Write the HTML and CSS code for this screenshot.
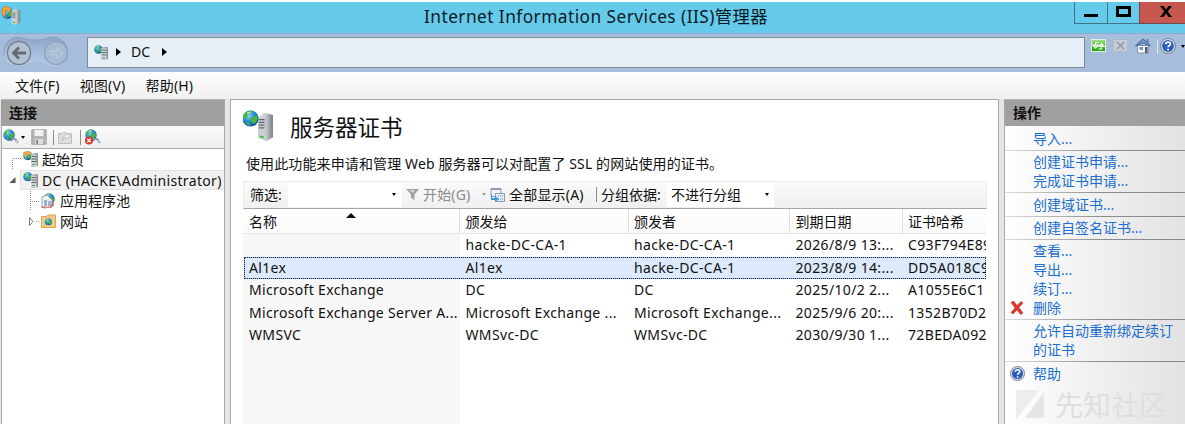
FILE: index.html
```
<!DOCTYPE html>
<html lang="zh-CN">
<head>
<meta charset="utf-8">
<title>Internet Information Services (IIS)管理器</title>
<link rel="stylesheet" href="styles.css">
</head>
<body>
<svg class="defs" width="0" height="0">
  <defs>
    <radialGradient id="sea" cx=".35" cy=".3" r=".8"><stop offset="0" stop-color="#9fe0ff"/><stop offset=".45" stop-color="#2c8be0"/><stop offset="1" stop-color="#0c3f9c"/></radialGradient>
    <linearGradient id="metal"><stop offset="0" stop-color="#e4e7ea"/><stop offset=".55" stop-color="#c2c7cb"/><stop offset="1" stop-color="#777e84"/></linearGradient>
    <linearGradient id="green" x2="0" y2="1"><stop offset="0" stop-color="#9be08a"/><stop offset=".5" stop-color="#4fc02f"/><stop offset="1" stop-color="#28a012"/></linearGradient>
    <linearGradient id="cradle" x2="0" y2="1"><stop offset="0" stop-color="#8ba5cb"/><stop offset=".5" stop-color="#a3bcdc"/><stop offset="1" stop-color="#b5cbe6"/></linearGradient>
    <symbol id="globe" viewBox="0 0 16 16">
      <circle cx="8" cy="8" r="7.6" fill="url(#sea)"/>
      <path d="M2 4Q5 0 9 1L8 4 5 5 5 8 2 9zM9 7l4-2 2 3-2 4-3 1-2-3zM4 11l3 1 1 3-4-2z" fill="#45b53c"/>
      <path d="M4 3q3-2 5-1l-3 2z" fill="#d8f8d0" opacity=".8"/>
    </symbol>
    <symbol id="tower" viewBox="0 0 16 30">
      <path d="M0 4 7 0 16 2V26L9 30 0 27z" fill="url(#metal)"/>
      <path d="M0 4 8 5V29L0 27z" fill="#c9ced2"/>
      <path d="M1 7h6M1 10h6M1 13h6M1 16h6" stroke="#5f676e" stroke-width="1.3"/>
      <path d="M2 25l4 1" stroke="#37c43b" stroke-width="2"/>
    </symbol>
    <symbol id="server" viewBox="0 0 16 16">
      <use href="#globe" x="0" y="0" width="9.5" height="9.5"/>
      <path d="M8 3l6-1 1 1v12l-6 1-1-1z" fill="#8b9298"/>
      <path d="M8 3.500h5.500v12H8z" fill="#d0d5d8"/>
      <path d="M8.500 5.500h5M8.500 8h5M8.500 10.500h5" stroke="#5d666d"/>
      <path d="M9 13.500h3" stroke="#43a650"/>
    </symbol>
    <symbol id="connect" viewBox="0 0 16 16">
      <use href="#globe" width="12" height="12"/>
      <path d="M8 12q2-4 5-1l2 3" fill="none" stroke="#8296aa" stroke-width="2"/><circle cx="13.500" cy="12.500" r="1.500" fill="#b8c8d8"/>
    </symbol>
    <symbol id="help" viewBox="0 0 16 16">
      <circle cx="8" cy="8" r="7.500" fill="#dde2e8" stroke="#77808d"/>
      <circle cx="8" cy="8" r="5.900" fill="#2b5eb8"/>
      <path d="M5.700 6.200C5.700 3.300 10.500 3.400 10.400 6c0 1.500-2.300 1.600-2.300 3.300M8.100 10.800v1.700" fill="none" stroke="#fff" stroke-width="1.700"/>
    </symbol>
  </defs>
</svg>
<div class="window">
  <header class="titlebar">
    <svg class="app-icon" viewBox="0 0 20 19"><use href="#globe" x="1" y="2" width="11" height="11"/><path d="M1 3L4 0 10 2 9 7 5 4 4 11 1 8z" fill="#f2a33c" stroke="#a46c2e" stroke-width=".5"/><use href="#tower" x="10" y="3" width="10" height="16"/></svg>
    <h1 class="title">Internet Information Services (IIS)管理器</h1>
    <div class="controls">
      <span class="ctl"><svg width="14" height="12"><path d="M0 9.500h14" stroke="#000" stroke-width="3"/></svg></span>
      <span class="ctl"><svg width="15" height="11"><path d="M1.500 1.500h12v8h-12z" fill="none" stroke="#000" stroke-width="3"/></svg></span>
      <span class="ctl close"><svg width="12" height="11" viewBox="0 0 12 11"><path d="M0 0H3.500L6 3.400 8.500 0H12L7.800 5.400 12 11H8.500L6 7.500 3.500 11H0L4.200 5.400z"/></svg></span>
    </div>
  </header>

  <div class="addressbar">
    <svg class="nav" width="68" height="32" viewBox="0 0 68 32">
      <path d="M3 17C2 3 13 0 21 2q13 4 26 0c10-3 22 4 20 17-2 10-14 14-22 8q-9-3-20 1C14 33 4 27 3 17z" fill="url(#cradle)"/>
      <path d="M3 20C1 4 13 0 21 2q13 4 26 0c9-3 17 3 19 10" fill="none" stroke="#8ba1c2"/>
      <circle cx="18" cy="17" r="11.500" fill="#b3c3d6" stroke="#7c8188" stroke-width="1.400"/>
      <path d="M25 17H13M18 11.500L12.500 17l5.500 5.500" fill="none" stroke="#666a70" stroke-width="2.800"/>
      <circle cx="55" cy="17" r="11.500" fill="#a7bbd5" stroke="#8e9db3" stroke-width="1.200"/>
      <path d="M49 15.500h7v-4l6 5.500-6 5.500v-4h-7" fill="none" stroke="#c1cede" stroke-width="1"/>
    </svg>
    <div class="path">
      <svg class="i15" viewBox="0 0 16 16"><use href="#server"/></svg>
      <i class="crumb"></i><span class="crumb-name">DC</span><i class="crumb"></i>
    </div>
    <div class="address-tools">
      <svg width="15" height="15" viewBox="0 0 15 15"><path d="M0 1h15v13H0z" fill="#dcefdc"/><path d="M1 2h13v11H1z" fill="url(#green)"/><path d="M7.500 4.500H4.500V8M2 7l2.500 3L7 7zM7.500 11h3V7.500M8 8.500l2.500-3 2.500 3z" fill="none" stroke="#fff" stroke-width="1.200"/></svg>
      <svg width="15" height="15" viewBox="0 0 15 15"><path d="M.5 1.500h14v12H.5z" fill="#c5ccd4" stroke="#b2bac4"/><path d="M4 4l7 7M11 4l-7 7" stroke="#8d98a6" stroke-width="1.400"/></svg>
      <svg width="16" height="16" viewBox="0 0 16 16"><path d="M2.500 7.500h11v7.500h-11z" fill="#f6f8fb" stroke="#8291aa"/><path d="M.5 8L8 1l7.500 7L8 5z" fill="#7fa0d4" stroke="#5375ae" stroke-width="1.200"/><path d="M11.500 1h2v4h-2z" fill="#607db0"/><path d="M10 9h2.500v6H10z" fill="#46586f"/><path d="M4.500 9H8v3H4.500z" fill="#738db4"/></svg>
      <i class="divider"></i>
      <svg width="16" height="16"><use href="#help"/></svg>
      <i class="drop"></i>
    </div>
  </div>

  <nav class="menubar"><span>文件(F)</span><span>视图(V)</span><span>帮助(H)</span></nav>

  <main class="workspace">
    <aside class="connections">
      <h2 class="panel-title">连接</h2>
      <div class="conn-tools">
        <svg width="16" height="16"><use href="#connect"/></svg><i class="drop"></i>
        <svg class="save" width="16" height="16" viewBox="0 0 16 16"><path d="M.8.800h14.400v14.400H.8z" fill="#b4b4b4" stroke="#a2a2a2"/><path d="M3.500 1h9v6h-9z" fill="#f1f1f1"/><path d="M4 10h8v5H4z" fill="#dcdcdc"/><path d="M5 11h2v4H5z" fill="#8c8c8c"/></svg>
        <i class="vline"></i>
        <svg class="up" width="14" height="14" viewBox="0 0 14 14"><path d="M.5 3.500h4l1-1h2l1 1h5v10H.5z" fill="#dedede" stroke="#bdbdbd"/><path d="M4 11q0-5 4-6V3l4 3-4 3V7q-3 1-4 4z" fill="#f7f7f7" stroke="#b5b5b5" stroke-width=".7"/></svg>
        <i class="vline two"></i>
        <svg width="16" height="16"><use href="#connect"/><circle cx="4" cy="11.500" r="4" fill="#dd3526"/><path d="M2.300 9.800l3.400 3.400M5.700 9.800l-3.400 3.400" stroke="#fff" stroke-width="1.300"/></svg>
      </div>
      <div class="tree">
        <div class="node root"><svg class="guide" width="11" height="20"><path d="M.5 20V9.500h10" /></svg><svg class="i16" viewBox="0 0 16 16"><use href="#server"/><path d="M0 1l5-1 4 2-1 2-4-1-1 5-2-3z" fill="#eea249"/></svg><span>起始页</span></div>
        <div class="node host"><svg class="twist" width="8" height="8"><path d="M6.500 1v6h-6z" fill="#555"/></svg><div class="selected"><svg class="i16" viewBox="0 0 16 16"><use href="#server"/></svg><span class="host-name">DC (HACKE\Administrator)</span></div></div>
        <div class="node child"><svg class="guide" width="10" height="20"><path d="M.5 0v20M0 10.500h9" /></svg><svg class="i16" viewBox="0 0 16 16"><use href="#globe" x="3" y="0" width="12" height="12"/><path d="M2 4l5-2 5 5v7H2z" fill="#edf2f7" stroke="#9aa4b2"/><path d="M4 7h3v6H4zM8 8h3v5H8z" fill="#9ab2cb"/><path d="M1 13q6 3 10 0l2-5 1 4q-3 4-12 3z" fill="#e25a43"/></svg><span>应用程序池</span></div>
        <div class="node child sites"><svg class="guide arrow" width="12" height="20"><path class="closed" d="M1.500 6.500v8L5 10.500z"/><path d="M8 10.500h4"/></svg><svg class="i15" viewBox="0 0 15 15"><path d="M.5 2.500h5L7 1h7.500v12.500H.5z" fill="#f4c982" stroke="#dba557"/><use href="#globe" x="3.500" y="4" width="7.500" height="7.500"/></svg><span>网站</span></div>
      </div>
    </aside>

    <section class="content">
      <div class="heading">
        <svg width="32" height="32" viewBox="0 0 32 32"><use href="#tower" x="14" y="3" width="17" height="28"/><use href="#globe" x="-1" y="0" width="17" height="17"/></svg>
        <h2>服务器证书</h2>
      </div>
      <p class="intro">使用此功能来申请和管理 Web 服务器可以对配置了 SSL 的网站使用的证书。</p>
      <div class="filterbar">
        <label>筛选:</label><span class="combo filter"><i class="drop"></i></span>
        <svg class="funnel" width="13" height="13" viewBox="0 0 13 13"><path d="M0 1h13L8.500 6.500V12L5 10V6.500z" fill="#a3a3a3"/><path d="M3 2h6L7 5z" fill="#d5d5d5"/></svg>
        <span class="start">开始(G)</span><i class="drop dim"></i>
        <svg class="show-icon" width="16" height="16" viewBox="0 0 16 16"><path d="M1 1.500h10v8H1z" fill="#eef3f9" stroke="#8d9bad"/><path d="M1 2h10" stroke="#8d9bad" stroke-width="2"/><path d="M5.500 6.500h9v8h-9z" fill="#e3edf8" stroke="#8d9bad"/><path d="M8 9h5M8 12h5" stroke="#6d86a6" stroke-dasharray="1 1"/><path d="M2 7v4h3V9l4 3-4 3v-2H1V7z" fill="#3a9ad8"/></svg>
        <span class="show-all">全部显示(A)</span><i class="vline"></i><span class="group-label">分组依据:</span>
        <span class="combo group"><span>不进行分组</span><i class="drop"></i></span>
      </div>
      <div class="grid">
        <div class="row head"><span>名称<i class="sort"></i></span><span>颁发给</span><span>颁发者</span><span>到期日期</span><span>证书哈希</span></div>
        <div class="row"><span></span><span>hacke-DC-CA-1</span><span>hacke-DC-CA-1</span><span>2026/8/9 13:...</span><span>C93F794E89</span></div>
        <div class="row picked"><span>Al1ex</span><span>Al1ex</span><span>hacke-DC-CA-1</span><span>2023/8/9 14:...</span><span>DD5A018C9</span></div>
        <div class="row"><span>Microsoft Exchange</span><span>DC</span><span>DC</span><span>2025/10/2 2...</span><span>A1055E6C1</span></div>
        <div class="row"><span>Microsoft Exchange Server A...</span><span>Microsoft Exchange ...</span><span>Microsoft Exchange...</span><span>2025/9/6 20:...</span><span>1352B70D2</span></div>
        <div class="row"><span>WMSVC</span><span>WMSvc-DC</span><span>WMSvc-DC</span><span>2030/9/30 1...</span><span>72BEDA092</span></div>
      </div>
    </section>

    <aside class="actions">
      <h2 class="panel-title">操作</h2>
      <div class="group-box first"><a>导入...</a></div>
      <div class="group-box"><a>创建证书申请...</a><a>完成证书申请...</a></div>
      <div class="group-box roomy"><a>创建域证书...</a></div>
      <div class="group-box"><a>创建自签名证书...</a></div>
      <div class="group-box"><a>查看...</a><a>导出...</a><a>续订...</a><a><svg class="act-icon" width="14" height="14" viewBox="0 0 14 14"><path d="M1 1.500L3.500 0 7 4.500 11 .5 13 2 9 6.500 13 12 10.500 13.500 7 9 3 13 1 11.500 5 7z" fill="#d93a2d" stroke="#b82a21" stroke-width=".5"/></svg>删除</a></div>
      <div class="group-box"><a>允许自动重新绑定续订</a><a>的证书</a></div>
      <div class="group-box last"><a><svg class="act-icon help-icon" width="15" height="15"><use href="#help" width="15" height="15"/></svg>帮助</a></div>
      <div class="watermark"><svg width="32" height="31" viewBox="0 0 32 31"><path d="M0 1h23L0 31z" fill="#ededed"/><path d="M28 3v26H9z" fill="#e6e6e6"/></svg><span>先知社区</span></div>
    </aside>
  </main>
</div>
</body>
</html>
```
FILE: styles.css
```
* { box-sizing: border-box; }
body { margin: 0; background: #fff; }
.defs { display: block; position: absolute; }
svg { flex: none; display: block; }
.window {
  width: 1185px; height: 424px; padding-top: 2px; overflow: hidden;
  display: flex; flex-direction: column;
  font: 14px/19px "Noto Sans", "Noto Sans CJK SC", sans-serif; color: #111;
  white-space: nowrap;
}
h1, h2, p { margin: 0; font-weight: 400; }
.i16 { width: 16px; height: 16px; }
.i15 { width: 15px; height: 15px; }
.drop { flex: none; width: 0; height: 0; border: 2.5px solid transparent; border-top: 3px solid #000; border-bottom: 0; }
.drop.dim { border-top-color: #999; }
.vline { flex: none; width: 1px; height: 15px; background: #8c8c8c; }

.titlebar { height: 31px; background: #66caea; display: flex; position: relative; }
.app-icon { width: 20px; height: 19px; margin: 4px 0 0 1px; }
.title { flex: 1; margin-left: 403px; font-size: 17.3px; line-height: 29px; letter-spacing: .45px; color: #0b1b24; }
.controls { display: flex; height: 22px; }
.ctl { width: 33px; border-left: 1px solid #3b7387; border-bottom: 1px solid #3b7387; display: flex; align-items: center; justify-content: center; padding-bottom: 2px; }
.ctl + .ctl { width: 32px; }
.ctl.close { width: 46px; background: #c75850; padding-left: 6px; border-color: #6d4b50; }

.addressbar { height: 39px; background: #a6bedc; border-top: 1px solid #91a8cd; display: flex; }
.nav { margin: 2px 0 0 1px; }
.path { margin: 3px 0 0 18px; width: 998px; height: 31px; border: 1px solid #7e8b99; background: #e6eef6; display: flex; align-items: center; padding-left: 6px; }
.path .i15 { margin-top: -1px; }
.crumb { border: 4px solid transparent; border-left: 5px solid #000; border-right: 0; margin: 0 0 2px 7px; }
.crumb-name { margin: -2px 5px 0 10px; font-size: 14px; }
.address-tools { display: flex; align-items: flex-start; padding: 4px 0 0 6px; }
.address-tools svg + svg { margin-left: 7px; }
.address-tools .divider { width: 1px; height: 15px; margin: 1px 2px 0 6px; background: #dde7f2; }
.address-tools .drop { margin: 7px 0 0 5px; }
.path { flex: none; }

.menubar { height: 27px; background: linear-gradient(#fdfdfd, #f0f0f0); display: flex; gap: 20px; padding: 4px 0 0 15px; line-height: 19px; font-size: 14px; letter-spacing: .2px; }

.workspace { height: 325px; background: #e5e5e5; display: flex; padding-left: 1px; }
.panel-title { height: 27px; padding-left: 8px; background: #a0a0a0; border-top: 1px solid #b6b6b6; font-size: 14px; line-height: 26px; font-weight: 700; }
.connections { width: 224px; background: #fff; border: solid #a9a9a9; border-width: 0 1px; }
.connections .panel-title { margin-left: -1px; }
.conn-tools { height: 23px; border-bottom: 1px solid #a9a9a9; background: linear-gradient(#fbfbfb, #eee); display: flex; align-items: center; padding-left: 1px; }
.conn-tools .drop { margin-left: 2px; }
.conn-tools .save { margin-left: 6px; }
.conn-tools .vline { margin: 0 4px 0 6px; }
.conn-tools .vline.two { margin-left: 8px; }
.tree { padding-top: 0; }
.node { height: 20.700px; display: flex; align-items: center; font-size: 14px; }
.node > span { margin-left: 3px; }
.root { padding-left: 10px; }
.guide path { fill: none; stroke: #909090; stroke-dasharray: 1 1; }
.guide .closed { stroke: #777; stroke-dasharray: none; }
.host { padding-left: 7px; }
.selected { flex: 1; height: 20px; margin-left: 3px; padding-left: 2px; display: flex; align-items: center; background: #f0f0f0; border: 1px solid #e3e3e3; border-right: 0; }
.host-name { margin-left: 3px; font-size: 14px; letter-spacing: .34px; }
.child { padding-left: 28px; }
.child .i16 { margin-left: 0; margin-right: 1px; }
.sites { padding-left: 26px; }
.sites .i15 { margin-left: 1px; }
.sites > span { margin-left: 4px; }

.content { width: 769px; margin-left: 5px; background: #fff; border: 1px solid #aaa; border-bottom: 0; padding-left: 12px; }
.heading { height: 52px; display: flex; padding-top: 10px; }
.heading h2 { margin-left: 15px; font-size: 22.500px; line-height: 35px; }
.intro { height: 29px; padding: 2px 0 0 3px; letter-spacing: .12px; }
.filterbar { width: 744px; height: 28px; border: 1px solid #ececec; border-bottom: 1px solid #a6a6a6; background: linear-gradient(#fafafa, #f0f0f0); display: flex; align-items: center; padding: 0 0 1px 6px; }
.filterbar label { width: 38px; }
.combo { display: flex; align-items: center; height: 25px; background: #fff; }
.combo.filter { width: 114px; justify-content: flex-end; padding-right: 6px; }
.funnel { margin: 0 4px 0 4px; }
.start { width: 59px; color: #8b8b8b; letter-spacing: .15px; }
.show-icon { margin: 0 3px 0 4px; }
.show-all { width: 87px; letter-spacing: .2px; }
.group-label { margin-left: 4px; width: 66px; }
.combo.group { width: 107px; padding: 0 5px 0 4px; justify-content: space-between; }
.grid { width: 743px; height: 216px; background: linear-gradient(90deg, #f7f7f7 217px, #fff 217px); overflow: hidden; }
.row { height: 22.500px; display: grid; grid-template-columns: 217px 168.500px 161.500px 112.500px 83.500px; line-height: 22px; font-size: 14px; letter-spacing: .34px; }
.row > span { padding-left: 5.500px; overflow: hidden; position: relative; }
.row > span:first-child { padding-left: 6px; }
.head { height: 25px; background: linear-gradient(#fff, #fafafa); border-bottom: 1px solid #e5e5e5; line-height: 25px; letter-spacing: 0; }
.head > span { border-right: 1px solid #dedede; }
.head > span:last-child { border-right: 0; }
.sort { position: absolute; left: 103px; top: 4px; border: 5px solid transparent; border-bottom: 5px solid #111; border-top: 0; }
.picked { background: #dceafc; border: 1px solid #8fb2e2; border-right: 0; line-height: 20px; margin-left: 1px; outline: 1px dotted #1b2c48; outline-offset: -1px; grid-template-columns: 215px 168.500px 161.500px 112.500px 83.500px; }
.row.picked > span:first-child { padding-left: 4px; }

.actions { width: 181px; margin-left: 5px; border-left: 1px solid #aaa; background: linear-gradient(90deg, #fff, #e2e2e2); display: flex; flex-direction: column; }
.group-box { padding: 1px 0 2px 28px; border-bottom: 1px solid; border-image: linear-gradient(90deg, #ddd, #8b8b8b 55%) 1; }
.group-box.first { padding-top: 3px; }
.group-box.roomy { padding-top: 2px; }
.group-box.last { border-bottom: 0; padding-top: 2px; }
.group-box a { display: flex; align-items: center; height: 19px; color: #1c6fce; font-size: 14px; }
.act-icon { margin: 0 9px 0 -23px; }
.act-icon.help-icon { margin-right: 8px; }
.watermark { display: flex; gap: 7px; margin: 4px 0 0 11px; color: #dfdfdf; font-size: 28px; line-height: 32px; }
```
